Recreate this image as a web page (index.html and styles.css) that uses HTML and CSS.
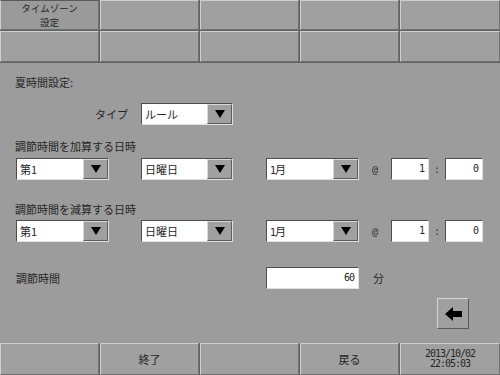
FILE: index.html
```html
<!DOCTYPE html>
<html lang="ja">
<head>
    <meta charset="UTF-8">
    <title>タイムゾーン設定</title>
    <link rel="stylesheet" href="styles.css">
</head>
<body>
<div class="screen">
    <div class="nav">
        <div class="key active"><span>タイムゾーン</span><span>設定</span></div>
        <div class="key"></div>
        <div class="key"></div>
        <div class="key"></div>
        <div class="key"></div>
        <div class="key"></div>
        <div class="key"></div>
        <div class="key"></div>
        <div class="key"></div>
        <div class="key"></div>
    </div>

    <div class="main">
        <div class="label">夏時間設定:</div>

        <div class="row type-row">
            <div class="type-label">タイプ</div>
            <div class="select w92">
                <div class="val">ルール</div>
                <div class="drop"><span class="tri"></span></div>
            </div>
        </div>

        <div class="label gap-a">調節時間を加算する日時</div>
        <div class="row date-row r1">
            <div class="select w93"><div class="val">第1</div><div class="drop"><span class="tri"></span></div></div>
            <div class="select w92 s2"><div class="val">日曜日</div><div class="drop"><span class="tri"></span></div></div>
            <div class="select w93 s3"><div class="val"><span class="num">1</span>月</div><div class="drop"><span class="tri"></span></div></div>
            <div class="sym at">@</div>
            <div class="field w38 num">1</div>
            <div class="sym colon">:</div>
            <div class="field w38 num">0</div>
        </div>

        <div class="label gap-b">調節時間を減算する日時</div>
        <div class="row date-row r2">
            <div class="select w93"><div class="val">第1</div><div class="drop"><span class="tri"></span></div></div>
            <div class="select w92 s2"><div class="val">日曜日</div><div class="drop"><span class="tri"></span></div></div>
            <div class="select w93 s3"><div class="val"><span class="num">1</span>月</div><div class="drop"><span class="tri"></span></div></div>
            <div class="sym at">@</div>
            <div class="field w38 num">1</div>
            <div class="sym colon">:</div>
            <div class="field w38 num">0</div>
        </div>

        <div class="row adjust-row">
            <div class="adjust-label">調節時間</div>
            <div class="field w93 num">60</div>
            <div class="unit">分</div>
        </div>

        <div class="row back-row">
            <div class="back-btn">
                <svg width="17" height="14" viewBox="0 0 17 14"><polygon points="0,7 8,0 8,4 17,4 17,10 8,10 8,14" fill="#000"/></svg>
            </div>
        </div>
    </div>

    <div class="footer">
        <div class="key"></div>
        <div class="key">終了</div>
        <div class="key"></div>
        <div class="key">戻る</div>
        <div class="key clock num"><span>2013/10/02</span><span>22:05:03</span></div>
    </div>
</div>
</body>
</html>
```

FILE: styles.css
```css
body {
    margin: 0;
    background: #9c9c9c;
    font-family: "Noto Sans CJK JP", "DejaVu Sans", sans-serif;
    font-size: 11px;
    color: #262626;
}
.screen {
    width: 500px;
    height: 375px;
    display: flex;
    flex-direction: column;
    overflow: hidden;
}
.nav, .footer {
    display: grid;
    grid-template-columns: repeat(4, 99px) 1fr;
    gap: 1px;
    background: #626262;
}
.nav {
    grid-template-rows: 30px 31px;
    border-bottom: 1px solid #626262;
}
.footer {
    height: 32px;
    grid-template-rows: 32px;
}
.key {
    background: #a0a0a0;
    border-top: 1px solid #cfcfcf;
    border-left: 1px solid #cfcfcf;
    border-right: 1px solid #6e6e6e;
    border-bottom: 1px solid #6e6e6e;
    display: flex;
    flex-direction: column;
    align-items: center;
    justify-content: center;
    text-align: center;
    font-size: 11px;
}
.key.active {
    background: #9a9a9a;
    border-top-color: #5a5a5a;
    font-size: 9.5px;
    line-height: 14px;
}
.key.clock {
    line-height: 10px;
}
.main {
    flex: 1;
    padding-top: 12px;
}
.label {
    padding-left: 15px;
    line-height: 14px;
    height: 14px;
}
.gap-a {
    margin-top: 14px;
}
.gap-b {
    margin-top: 22px;
}
.row {
    display: flex;
    align-items: center;
    height: 22px;
    padding-left: 16px;
}
.type-row {
    margin-top: 14px;
}
.type-label {
    width: 112px;
    padding-right: 13px;
    text-align: right;
}
.r1 {
    margin-top: 5px;
}
.r2 {
    margin-top: 4px;
}
.select {
    display: flex;
    height: 22px;
    box-sizing: border-box;
    border: 1px solid;
    border-color: #4e4e4e #e0e0e0 #e0e0e0 #4e4e4e;
}
.select .val {
    flex: 1;
    background: #fff;
    line-height: 20px;
    padding-left: 3px;
}
.select .drop {
    width: 25px;
    box-sizing: border-box;
    background: #a0a0a0;
    border: 1px solid;
    border-color: #d8d8d8 #5e5e5e #5e5e5e #d8d8d8;
    display: flex;
    align-items: center;
    justify-content: center;
}
.tri {
    width: 0;
    height: 0;
    border-left: 5px solid transparent;
    border-right: 5px solid transparent;
    border-top: 8px solid #000;
}
.w92 { width: 92px; }
.w93 { width: 93px; }
.w38 { width: 38px; }
.s2 { margin-left: 32px; }
.s3 { margin-left: 33px; }
.sym {
    text-align: center;
    font-family: "DejaVu Sans Mono", monospace;
    font-size: 10px;
    color: #333;
}
.at { width: 32px; }
.colon { width: 16px; }
.field {
    height: 22px;
    box-sizing: border-box;
    background: #fff;
    border: 1px solid;
    border-color: #4e4e4e #e0e0e0 #e0e0e0 #4e4e4e;
    text-align: right;
    padding-right: 4px;
    line-height: 20px;
}
.num {
    font-family: "DejaVu Sans Mono", monospace;
    font-size: 10px;
    letter-spacing: -1px;
}
.adjust-row {
    margin-top: 25px;
}
.adjust-label {
    width: 250px;
}
.unit {
    margin-left: 14px;
}
.back-row {
    margin-top: 9px;
    height: 31px;
    padding-left: 437px;
}
.back-btn {
    width: 32px;
    height: 31px;
    box-sizing: border-box;
    background: #a0a0a0;
    border: 1px solid;
    border-color: #d4d4d4 #5a5a5a #5a5a5a #d4d4d4;
    display: flex;
    align-items: center;
    justify-content: center;
}
```
